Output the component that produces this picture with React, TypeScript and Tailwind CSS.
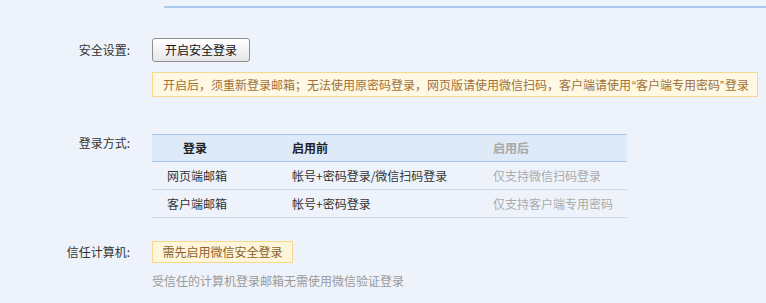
import React from "react";

const font = { fontFamily: '"Noto Sans CJK SC", "Noto Sans", sans-serif' };

export default function App() {
  return (
    <div className="w-[766px] h-[303px] bg-[#eef3fb] overflow-hidden text-[12px] text-[#333]" style={font}>
      <div className="ml-[164px] mt-[6px] h-[2px] bg-[#a9c8ee]" />

      {/* 安全设置 */}
      <div className="flex mt-[30px]">
        <div className="w-[130px] text-right leading-[24px] text-[#333]">安全设置:</div>
        <div className="ml-[22px] flex flex-col items-start">
          <button className="h-[24px] w-[98px] rounded-[3px] border border-[#8e8e8e] bg-gradient-to-b from-[#ffffff] to-[#e6e6e6] text-[12px] leading-[22px] text-[#111]">
            开启安全登录
          </button>
          <div className="mt-[10px] h-[25px] w-[606px] border border-[#f6d88e] bg-[#fff8e3] px-[10px] leading-[23px] whitespace-nowrap text-[#a0703a]">
            开启后，须重新登录邮箱；无法使用原密码登录，网页版请使用微信扫码，客户端请使用
            <span className="font-['Liberation_Sans'] pl-[1px]">“</span>客户端专用密码
            <span className="font-['Liberation_Sans'] pr-[1px]">”</span>登录
          </div>
        </div>
      </div>

      {/* 登录方式 */}
      <div className="flex mt-[37px]">
        <div className="w-[130px] text-right leading-[18px] text-[#333]">登录方式:</div>
        <div className="ml-[22px] w-[475px]">
          <div className="grid grid-cols-[140px_201px_134px] h-[28px] items-center bg-[#deeaf8] border-t border-b border-[#a9c6ea] font-bold">
            <div className="pl-[31px] text-[#222]">登录</div>
            <div className="text-[#222]">启用前</div>
            <div className="text-[#a8a8a8]">启用后</div>
          </div>
          <div className="grid grid-cols-[140px_201px_134px] h-[28px] items-center border-b border-[#d3d9e2]">
            <div className="pl-[15px]">网页端邮箱</div>
            <div>帐号+密码登录/微信扫码登录</div>
            <div className="text-[#aaaaaa]">仅支持微信扫码登录</div>
          </div>
          <div className="grid grid-cols-[140px_201px_134px] h-[28px] items-center border-b border-[#d3d9e2]">
            <div className="pl-[15px]">客户端邮箱</div>
            <div>帐号+密码登录</div>
            <div className="text-[#aaaaaa]">仅支持客户端专用密码</div>
          </div>
        </div>
      </div>

      {/* 信任计算机 */}
      <div className="flex mt-[23px]">
        <div className="w-[130px] text-right leading-[22px] text-[#333]">信任计算机:</div>
        <div className="ml-[22px] flex flex-col items-start">
          <div className="h-[22px] w-[141px] border border-[#f6d88e] bg-[#fff5d8] text-center leading-[20px] text-[#8a6230]">
            需先启用微信安全登录
          </div>
          <div className="mt-[10px] leading-[16px] text-[#9a9a9a]">受信任的计算机登录邮箱无需使用微信验证登录</div>
        </div>
      </div>
    </div>
  );
}
